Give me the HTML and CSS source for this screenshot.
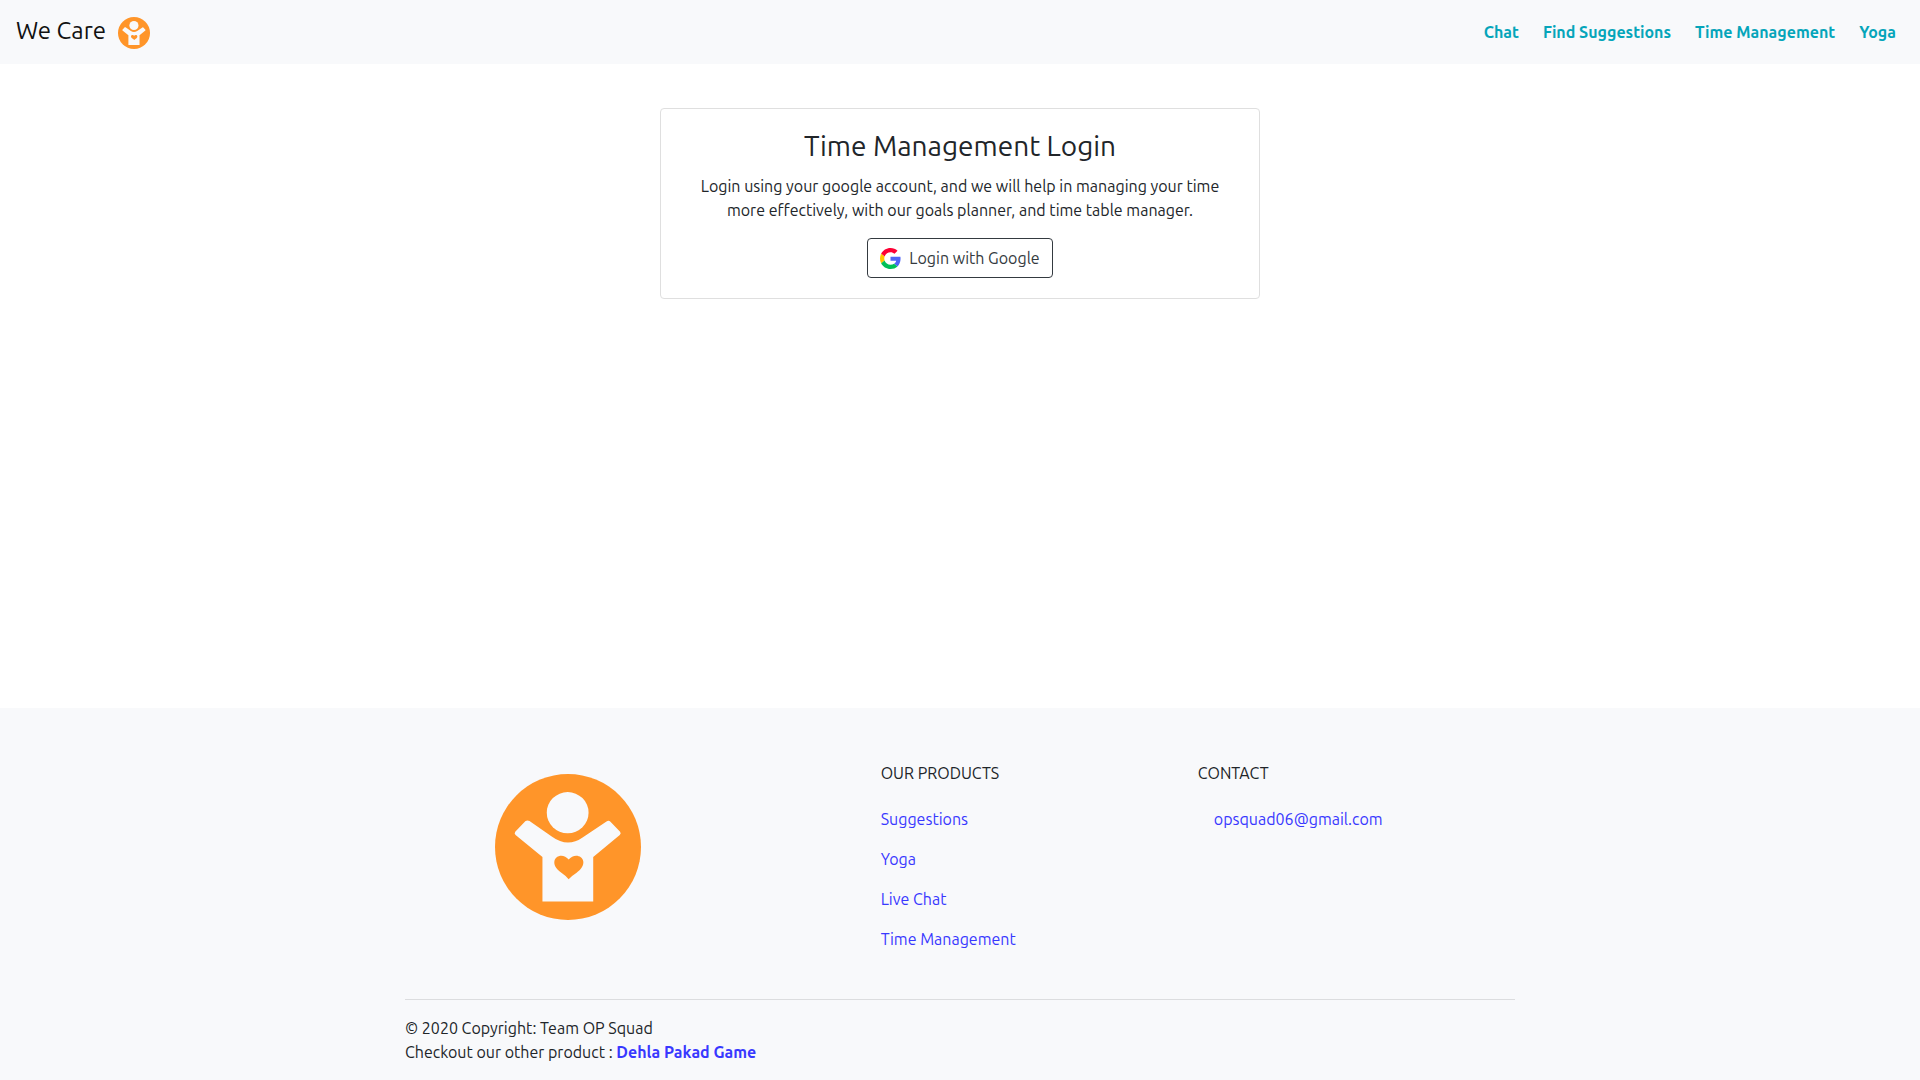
FILE: index.html
```html
<!DOCTYPE html>
<html lang="en">
<head>
<meta charset="utf-8">
<meta name="viewport" content="width=device-width, initial-scale=1">
<title>We Care</title>
<link rel="stylesheet" href="styles.css">
</head>
<body>
<svg class="sprite" aria-hidden="true">
  <symbol id="logo" viewBox="45 41 440 440">
    <circle cx="265" cy="261" r="220" fill="#ff9529"/>
    <ellipse cx="264" cy="157.500" rx="63" ry="62" fill="#f8f9fb"/>
    <path fill="#f8f9fb" d="M137 183Q143 179 149 183L217 230Q264 264 309 232L381 184Q388 180 393 185L422 215Q426 220 421 225L341 291V425H188V291L107 225Q102 220 106 215Z"/>
    <path fill="#ff9529" d="M267 358Q259 348 247 340C224 324 223 312 224 304C227 285 253 280 267 299C281 280 308 285 311 304C313 315 305 329 290 339Q274 349 267 358Z"/>
  </symbol>
</svg>
<header>
  <nav class="navbar">
    <a class="brand" href="#">We Care <svg class="brand-logo" aria-hidden="true"><use href="#logo"/></svg></a>
    <div class="nav-links">
      <a href="#">Chat</a>
      <a href="#">Find Suggestions</a>
      <a href="#">Time Management</a>
      <a href="#">Yoga</a>
    </div>
  </nav>
</header>
<main>
  <section class="card">
    <h1>Time Management Login</h1>
    <p>Login using your google account, and we will help in managing your time more effectively, with our goals planner, and time table manager.</p>
    <button class="login" type="button">
      <svg class="google" viewBox="0 0 48 48" aria-hidden="true">
        <path fill="#fd0034" d="M24 9.500c3.540 0 6.710 1.220 9.210 3.600l6.850-6.850C35.900 2.380 30.470 0 24 0 14.620 0 6.510 5.380 2.560 13.220l7.980 6.190C12.430 13.720 17.740 9.500 24 9.500z"/>
        <path fill="#4f63f5" d="M46.980 24.550c0-1.570-.15-3.090-.38-4.550H24v9.020h12.940c-.58 2.960-2.260 5.480-4.780 7.180l7.730 6c4.510-4.180 7.090-10.360 7.090-17.650z"/>
        <path fill="#ffc400" d="M10.530 28.590c-.48-1.450-.76-2.990-.76-4.590s.27-3.140.76-4.590l-7.980-6.190C.92 16.460 0 20.120 0 24c0 3.880.92 7.540 2.560 10.780l7.970-6.190z"/>
        <path fill="#00c058" d="M24 48c6.480 0 11.930-2.130 15.890-5.810l-7.730-6c-2.150 1.450-4.920 2.300-8.160 2.300-6.260 0-11.570-4.220-13.470-9.910l-7.980 6.190C6.510 42.620 14.620 48 24 48z"/>
      </svg>
      Login with Google
    </button>
  </section>
</main>
<footer>
  <div class="container">
    <div class="columns">
      <div class="footer-brand"><svg class="footer-logo" role="img" aria-label="We Care"><use href="#logo"/></svg></div>
      <div class="links">
        <h2>Our Products</h2>
        <a href="#">Suggestions</a>
        <a href="#">Yoga</a>
        <a href="#">Live Chat</a>
        <a href="#">Time Management</a>
      </div>
      <div class="links">
        <h2>Contact</h2>
        <a class="mail" href="mailto:opsquad06@gmail.com">opsquad06@gmail.com</a>
      </div>
    </div>
    <hr>
    <p>© 2020 Copyright: Team OP Squad<br>Checkout our other product : <a class="strong" href="#">Dehla Pakad Game</a></p>
  </div>
</footer>
</body>
</html>
```
FILE: styles.css
```css
* { box-sizing: border-box; }

body {
  display: flex;
  flex-direction: column;
  min-height: 100vh;
  margin: 0;
  font-family: Ubuntu, "Noto Sans", sans-serif;
  font-size: 16px;
  line-height: 24px;
  color: #212529;
  background: #fff;
}

h1, h2, p { margin: 0; font-weight: 400; }
a { color: #3838ff; text-decoration: none; }
.sprite { display: none; }

.navbar {
  display: flex;
  align-items: center;
  justify-content: space-between;
  min-height: 64px;
  padding: 0 24px 0 16px;
  background: #f8f9fb;
}
.brand {
  display: flex;
  align-items: flex-end;
  gap: 12px;
  padding-bottom: 2px;
  font-size: 24px;
  line-height: 36px;
  color: #111;
}
.brand-logo { width: 32px; height: 32px; }
.nav-links { display: flex; gap: 24px; }
.nav-links a { font-weight: 700; color: #05a5ba; }

main { flex: 1; padding: 44px 16px; }
.card {
  max-width: 600px;
  margin: 0 auto;
  padding: 20px;
  border: 1px solid #dfdfdf;
  border-radius: 4px;
  text-align: center;
}
.card h1 { margin-bottom: 11px; font-size: 28px; line-height: 34px; }
.card p { margin-bottom: 16px; padding: 0 12px; }
.login {
  display: inline-flex;
  align-items: center;
  justify-content: center;
  gap: 8px;
  min-width: 186px;
  height: 40px;
  padding: 0 11px;
  border: 1px solid #343a40;
  border-radius: 4px;
  background: #fff;
  color: #343a40;
  font: inherit;
  vertical-align: top;
}
.google { width: 21px; height: 21px; }

footer { padding: 53px 16px 16px; background: #f8f9fb; }
.container { max-width: 1110px; margin: 0 auto; }
.columns { display: grid; grid-template-columns: 3fr 2fr 2fr; }
.footer-brand { padding: 13px 0 0 90px; }
.footer-logo { display: block; width: 146px; height: 146px; }
.links { display: flex; flex-direction: column; align-items: flex-start; gap: 16px; }
.links h2 { margin-bottom: 6px; font-size: 16px; text-transform: uppercase; }
.mail { margin-left: 16px; }
hr { margin: 48px 0 16px; border: 0; border-top: 1px solid #dcdddf; }
.strong { font-weight: 700; }
```
